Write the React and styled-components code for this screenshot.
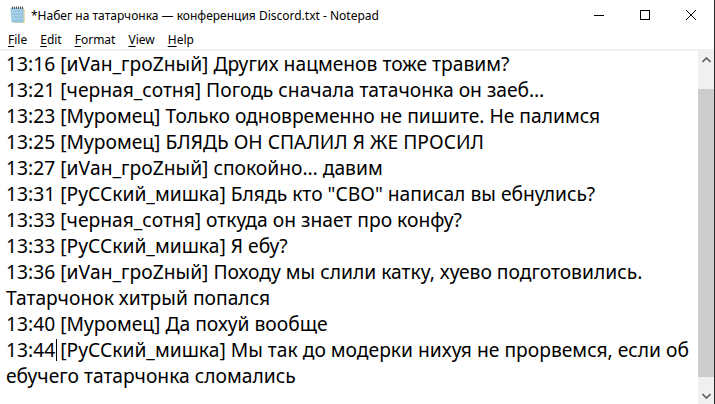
import React from "react";
import styled, { createGlobalStyle } from "styled-components";

const GlobalStyle = createGlobalStyle`
  html, body { margin: 0; padding: 0; background: #fff; }
  body { font-family: "Noto Sans", "Open Sans", sans-serif; }
`;

const lines = [
  "13:16 [иVан_гроZный] Других нацменов тоже травим?",
  "13:21 [черная_сотня] Погодь сначала татачонка он заеб…",
  "13:23 [Муромец] Только одновременно не пишите. Не палимся",
  "13:25 [Муромец] БЛЯДЬ ОН СПАЛИЛ Я ЖЕ ПРОСИЛ",
  "13:27 [иVан_гроZный] спокойно… давим",
  "13:31 [РуССкий_мишка] Блядь кто \"СВО\" написал вы ебнулись?",
  "13:33 [черная_сотня] откуда он знает про конфу?",
  "13:33 [РуССкий_мишка] Я ебу?",
  "13:36 [иVан_гроZный] Походу мы слили катку, хуево подготовились.",
  "Татарчонок хитрый попался",
  "13:40 [Муромец] Да похуй вообще",
];

const menus = ["File", "Edit", "Format", "View", "Help"];

function NotepadIcon() {
  return (
    <svg width="16" height="18" viewBox="0 0 16 18">
      <path d="M2 2h11l2 2v13H4z" fill="#e8dcb5" />
      <path d="M1 2h12v14H2z" fill="#a9d3ea" stroke="#6aa7c8" strokeWidth="0.6" />
      {[5, 8, 11, 14].map((y) => (
        <line key={y} x1="3" y1={y} x2="11.5" y2={y} stroke="#7fb6d4" strokeWidth="0.8" />
      ))}
      {[2, 4, 6, 8, 10, 12].map((x) => (
        <rect key={x} x={x} y="0.5" width="1" height="2.5" fill="#555" />
      ))}
    </svg>
  );
}

export default function App() {
  return (
    <>
      <GlobalStyle />
      <Window>
        <TitleBar>
          <IconWrap>
            <NotepadIcon />
          </IconWrap>
          <Title>*Набег на татарчонка — конференция Discord.txt - Notepad</Title>
          <Controls>
            <CtrlButton>
              <svg width="10" height="10" viewBox="0 0 10 10">
                <line x1="0" y1="5.5" x2="10" y2="5.5" stroke="#000" strokeWidth="1" />
              </svg>
            </CtrlButton>
            <CtrlButton>
              <svg width="10" height="10" viewBox="0 0 10 10">
                <rect x="0.5" y="0.5" width="9" height="9" fill="none" stroke="#000" strokeWidth="1" />
              </svg>
            </CtrlButton>
            <CtrlButton>
              <svg width="10" height="10" viewBox="0 0 10 10">
                <path d="M0 0L10 10M10 0L0 10" stroke="#000" strokeWidth="1" />
              </svg>
            </CtrlButton>
          </Controls>
        </TitleBar>
        <MenuBar>
          {menus.map((m) => (
            <MenuItem key={m}>
              <u>{m[0]}</u>
              {m.slice(1)}
            </MenuItem>
          ))}
        </MenuBar>
        <Body>
          <Editor>
            {lines.map((l, i) => (
              <Line key={i}>{l}</Line>
            ))}
            <Line>
              13:44<Caret /> [РуССкий_мишка] Мы так до модерки нихуя не прорвемся, если об
            </Line>
            <Line>ебучего татарчонка сломались</Line>
          </Editor>
          <ScrollBar>
            <Arrow>
              <svg width="9" height="6" viewBox="0 0 9 6">
                <path d="M0.5 5L4.5 1L8.5 5" fill="none" stroke="#606060" strokeWidth="1.6" />
              </svg>
            </Arrow>
            <Track>
              <Thumb />
            </Track>
            <Arrow>
              <svg width="9" height="6" viewBox="0 0 9 6">
                <path d="M0.5 1L4.5 5L8.5 1" fill="none" stroke="#606060" strokeWidth="1.6" />
              </svg>
            </Arrow>
          </ScrollBar>
        </Body>
      </Window>
    </>
  );
}

const Window = styled.div`
  width: 715px;
  height: 404px;
  display: flex;
  flex-direction: column;
  background: #fff;
  box-sizing: border-box;
  border-right: 1px solid #2b2b2b;
  overflow: hidden;
`;

const TitleBar = styled.div`
  height: 30px;
  display: flex;
  align-items: center;
  flex-shrink: 0;
`;

const IconWrap = styled.div`
  width: 16px;
  height: 18px;
  margin: 0 5px 0 10px;
  display: flex;
`;

const Title = styled.div`
  flex: 1;
  font-size: 12px;
  color: #000;
  white-space: nowrap;
  font-family: "Noto Sans", sans-serif;
`;

const Controls = styled.div`
  display: flex;
  height: 100%;
`;

const CtrlButton = styled.div`
  width: 46px;
  height: 100%;
  display: flex;
  align-items: center;
  justify-content: center;
`;

const MenuBar = styled.div`
  height: 19px;
  display: flex;
  align-items: center;
  padding-left: 1.5px;
  border-bottom: 1px solid #f0f0f0;
  flex-shrink: 0;
`;

const MenuItem = styled.span`
  font-size: 12px;
  padding: 0 6.5px;
  color: #000;
  u { text-decoration-thickness: 1px; text-underline-offset: 2px; }
`;

const Body = styled.div`
  flex: 1;
  display: flex;
  min-height: 0;
  border-top: 1px solid #f0f0f0;
`;

const Editor = styled.div`
  flex: 1;
  padding: 0 0 0 6px;
  font-family: "Noto Sans", "Open Sans", sans-serif;
  font-size: 19.25px;
  line-height: 26px;
  color: #000;
  overflow: hidden;
`;

const Line = styled.div`
  white-space: pre;
  height: 26px;
`;

const Caret = styled.span`
  display: inline-block;
  width: 1px;
  height: 22px;
  background: #000;
  vertical-align: -4px;
  margin-left: 1px;
  margin-right: -2px;
`;

const ScrollBar = styled.div`
  width: 16px;
  background: #f0f0f0;
  display: flex;
  flex-direction: column;
`;

const Arrow = styled.div`
  height: 17px;
  display: flex;
  align-items: center;
  justify-content: center;
  flex-shrink: 0;
`;

const Track = styled.div`
  flex: 1;
  padding: 21px 0 10px;
  display: flex;
`;

const Thumb = styled.div`
  flex: 1;
  background: #cdcdcd;
`;
